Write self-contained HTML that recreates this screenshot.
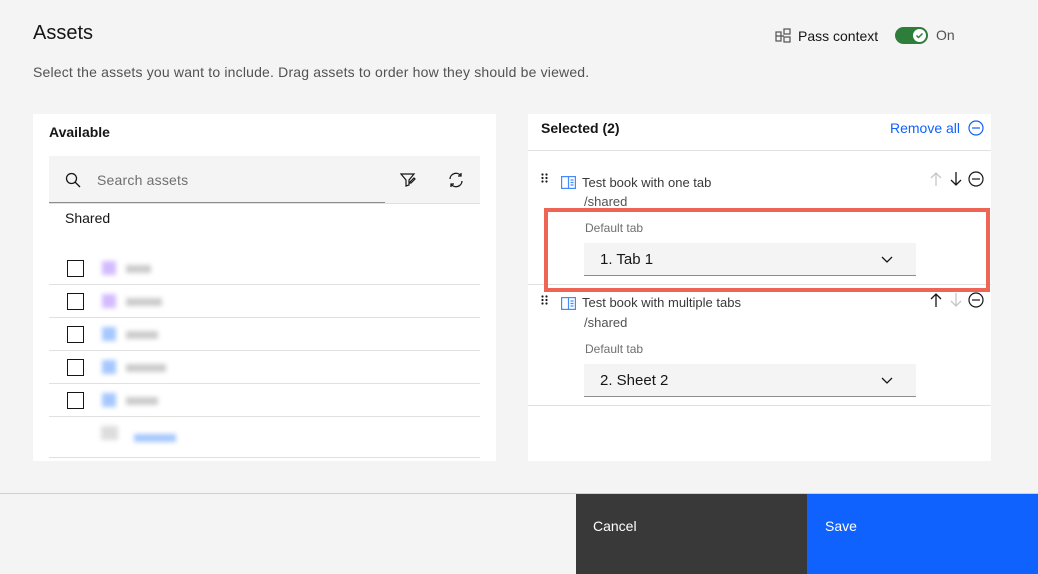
<!DOCTYPE html>
<html><head><style>
*{box-sizing:border-box;margin:0;padding:0}
body{width:1038px;height:574px;background:#f4f4f4;font-family:"Liberation Sans",sans-serif;color:#161616;position:relative;overflow:hidden}
.a{position:absolute}
.hr{position:absolute;height:1px;background:#e0e0e0}
.cb{position:absolute;width:17px;height:17px;border:1.5px solid #161616;left:67px}
.blur{position:absolute;filter:blur(2.5px)}
.sel{position:absolute;left:584px;width:332px;height:33px;background:#f4f4f4;border-bottom:1px solid #8d8d8d;font-size:15px;padding:8px 16px}
</style></head><body>
<div class="a" style="left:33px;top:22px;font-size:20px">Assets</div>
<div class="a" style="left:33px;top:64px;font-size:14px;color:#525252;letter-spacing:0.18px">Select the assets you want to include. Drag assets to order how they should be viewed.</div>
<svg class="a" style="left:775px;top:28px" width="16" height="16" viewBox="0 0 16 16" fill="none" stroke="#525252" stroke-width="1.2"><rect x="1" y="4" width="5" height="9"/><rect x="9" y="1" width="6" height="5"/><rect x="9" y="9" width="6" height="5"/><path d="M6 8h3M1 8h5"/></svg>
<div class="a" style="left:798px;top:28px;font-size:14px">Pass context</div>
<div class="a" style="left:895px;top:27px;width:33px;height:17px;border-radius:9px;background:#2f7d3a"></div>
<div class="a" style="left:913px;top:29px;width:13px;height:13px;border-radius:50%;background:#fff"></div>
<svg class="a" style="left:915px;top:31px" width="9" height="9" viewBox="0 0 9 9"><path d="M1.5 4.5l2 2 4-4" stroke="#2f7d3a" stroke-width="1.5" fill="none"/></svg>
<div class="a" style="left:936px;top:27px;font-size:14px;color:#525252">On</div>

<div class="a" style="left:33px;top:114px;width:463px;height:347px;background:#fff"></div>
<div class="a" style="left:49px;top:124px;font-size:14px;font-weight:bold">Available</div>
<div class="a" style="left:49px;top:156px;width:431px;height:47px;background:#f4f4f4"></div>
<div class="a" style="left:49px;top:202px;width:336px;height:1px;background:#8d8d8d"></div>
<div class="hr" style="left:49px;top:203px;width:431px"></div>
<svg class="a" style="left:65px;top:172px" width="16" height="16" viewBox="0 0 16 16" fill="none" stroke="#161616" stroke-width="1.3"><circle cx="6.5" cy="6.5" r="5"/><path d="M10 10l5 5"/></svg>
<div class="a" style="left:97px;top:172px;font-size:14px;color:#6f6f6f;letter-spacing:0.2px">Search assets</div>
<svg class="a" style="left:400px;top:172px" width="16" height="16" viewBox="0 0 16 16" fill="none" stroke="#161616" stroke-width="1.2"><path d="M1 2h13l-5 6v5l-3 1V8z"/><path d="M10 10l4-4 1 1-4 4h-1z"/></svg>
<svg class="a" style="left:448px;top:172px" width="16" height="16" viewBox="0 0 16 16" fill="none" stroke="#161616" stroke-width="1.3"><path d="M2 7a6 6 0 0 1 11-3M14 9a6 6 0 0 1-11 3"/><path d="M13 1v3h-3M3 15v-3h3"/></svg>
<div class="a" style="left:65px;top:210px;font-size:14px">Shared</div>
<div class="cb" style="top:260px"></div><div class="cb" style="top:293px"></div><div class="cb" style="top:326px"></div><div class="cb" style="top:359px"></div><div class="cb" style="top:392px"></div>
<div class="hr" style="left:49px;top:284px;width:431px"></div>
<div class="hr" style="left:49px;top:317px;width:431px"></div>
<div class="hr" style="left:49px;top:350px;width:431px"></div>
<div class="hr" style="left:49px;top:383px;width:431px"></div>
<div class="hr" style="left:49px;top:416px;width:431px"></div>
<div class="hr" style="left:49px;top:457px;width:431px"></div>
<div class="blur" style="left:102px;top:261px;width:14px;height:14px;background:#d4bbff"></div>
<div class="blur" style="left:102px;top:294px;width:14px;height:14px;background:#d4bbff"></div>
<div class="blur" style="left:102px;top:327px;width:14px;height:14px;background:#a6c8ff"></div>
<div class="blur" style="left:102px;top:360px;width:14px;height:14px;background:#a6c8ff"></div>
<div class="blur" style="left:102px;top:393px;width:14px;height:14px;background:#a6c8ff"></div>
<div class="blur" style="left:101px;top:426px;width:17px;height:14px;background:#ddd"></div>
<div class="blur" style="left:126px;top:265px;width:25px;height:8px;background:#ccc"></div>
<div class="blur" style="left:126px;top:298px;width:36px;height:8px;background:#ccc"></div>
<div class="blur" style="left:126px;top:331px;width:32px;height:8px;background:#ccc"></div>
<div class="blur" style="left:126px;top:364px;width:40px;height:8px;background:#ccc"></div>
<div class="blur" style="left:126px;top:397px;width:32px;height:8px;background:#ccc"></div>
<div class="blur" style="left:134px;top:434px;width:42px;height:8px;background:#a6c8ff"></div>

<div class="a" style="left:528px;top:114px;width:463px;height:347px;background:#fff"></div>
<div class="a" style="left:541px;top:120px;font-size:14px;font-weight:bold">Selected (2)</div>
<div class="a" style="left:890px;top:120px;font-size:14px;color:#0f62fe">Remove all</div>
<svg class="a" style="left:968px;top:120px" width="16" height="16" viewBox="0 0 16 16" fill="none" stroke="#0f62fe" stroke-width="1.2"><circle cx="8" cy="8" r="7"/><path d="M4 8h8"/></svg>
<div class="hr" style="left:528px;top:150px;width:463px"></div>

<svg class="a" style="left:541px;top:173px" width="8" height="12" viewBox="0 0 8 12" fill="#161616"><circle cx="1.5" cy="1.5" r="1.1"/><circle cx="5.5" cy="1.5" r="1.1"/><circle cx="1.5" cy="5" r="1.1"/><circle cx="5.5" cy="5" r="1.1"/><circle cx="1.5" cy="8.5" r="1.1"/><circle cx="5.5" cy="8.5" r="1.1"/></svg>
<svg class="a" style="left:561px;top:176px" width="15" height="13" viewBox="0 0 15 13" fill="none" stroke="#4589ff" stroke-width="1.2"><rect x="0.6" y="0.6" width="13.8" height="11.8"/><path d="M7.5 1v11M9.5 4h3M9.5 6.5h3M9.5 9h3"/></svg>
<div class="a" style="left:582px;top:175px;font-size:13px;color:#393939">Test book with one tab</div>
<div class="a" style="left:584px;top:194px;font-size:13px;color:#525252">/shared</div>
<svg class="a" style="left:928px;top:171px" width="16" height="16" viewBox="0 0 16 16" fill="none" stroke="#c6c6c6" stroke-width="1.3"><path d="M8 15V2M3 7l5-5 5 5"/></svg>
<svg class="a" style="left:948px;top:171px" width="16" height="16" viewBox="0 0 16 16" fill="none" stroke="#161616" stroke-width="1.3"><path d="M8 1v13M3 9l5 5 5-5"/></svg>
<svg class="a" style="left:968px;top:171px" width="16" height="16" viewBox="0 0 16 16" fill="none" stroke="#161616" stroke-width="1.2"><circle cx="8" cy="8" r="7"/><path d="M4 8h8"/></svg>
<div class="a" style="left:585px;top:221px;font-size:12px;color:#6f6f6f">Default tab</div>
<div class="sel" style="top:243px">1. Tab 1</div>
<svg class="a" style="left:881px;top:254px" width="12" height="10" viewBox="0 0 12 10" fill="none" stroke="#161616" stroke-width="1.3"><path d="M1 3l5 5 5-5"/></svg>
<div class="hr" style="left:528px;top:284px;width:463px"></div>
<div class="a" style="left:544px;top:208px;width:446px;height:84px;border:4px solid #ee6455"></div>

<svg class="a" style="left:541px;top:295px" width="8" height="12" viewBox="0 0 8 12" fill="#161616"><circle cx="1.5" cy="1.5" r="1.1"/><circle cx="5.5" cy="1.5" r="1.1"/><circle cx="1.5" cy="5" r="1.1"/><circle cx="5.5" cy="5" r="1.1"/><circle cx="1.5" cy="8.5" r="1.1"/><circle cx="5.5" cy="8.5" r="1.1"/></svg>
<svg class="a" style="left:561px;top:297px" width="15" height="13" viewBox="0 0 15 13" fill="none" stroke="#4589ff" stroke-width="1.2"><rect x="0.6" y="0.6" width="13.8" height="11.8"/><path d="M7.5 1v11M9.5 4h3M9.5 6.5h3M9.5 9h3"/></svg>
<div class="a" style="left:582px;top:295px;font-size:13px;color:#393939">Test book with multiple tabs</div>
<div class="a" style="left:584px;top:315px;font-size:13px;color:#525252">/shared</div>
<svg class="a" style="left:928px;top:292px" width="16" height="16" viewBox="0 0 16 16" fill="none" stroke="#161616" stroke-width="1.3"><path d="M8 15V2M3 7l5-5 5 5"/></svg>
<svg class="a" style="left:948px;top:292px" width="16" height="16" viewBox="0 0 16 16" fill="none" stroke="#c6c6c6" stroke-width="1.3"><path d="M8 1v13M3 9l5 5 5-5"/></svg>
<svg class="a" style="left:968px;top:292px" width="16" height="16" viewBox="0 0 16 16" fill="none" stroke="#161616" stroke-width="1.2"><circle cx="8" cy="8" r="7"/><path d="M4 8h8"/></svg>
<div class="a" style="left:585px;top:342px;font-size:12px;color:#6f6f6f">Default tab</div>
<div class="sel" style="top:364px">2. Sheet 2</div>
<svg class="a" style="left:881px;top:375px" width="12" height="10" viewBox="0 0 12 10" fill="none" stroke="#161616" stroke-width="1.3"><path d="M1 3l5 5 5-5"/></svg>
<div class="hr" style="left:528px;top:405px;width:463px"></div>

<div class="a" style="left:0;top:493px;width:1038px;height:1px;background:#d0d0d0"></div>
<div class="a" style="left:576px;top:494px;width:231px;height:80px;background:#393939;color:#fff;font-size:14px;padding:24px 17px">Cancel</div>
<div class="a" style="left:807px;top:494px;width:231px;height:80px;background:#0f62fe;color:#fff;font-size:14px;padding:24px 18px">Save</div>
</body></html>
